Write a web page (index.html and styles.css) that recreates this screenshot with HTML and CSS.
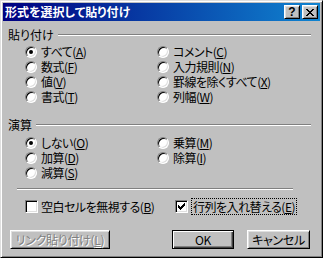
FILE: index.html
```html
<!DOCTYPE html>
<html lang="ja">
<head>
    <meta charset="UTF-8">
    <title>形式を選択して貼り付け</title>
    <link rel="stylesheet" href="styles.css">
</head>
<body>
    <div class="window">
        <div class="titlebar">
            <span class="title-text">形式を選択して貼り付け</span>
            <span class="tbtn help">?</span>
            <span class="tbtn close">
                <svg width="8" height="7" viewBox="0 0 8 7" shape-rendering="crispEdges"><path d="M0 0h2v1h-2z M6 0h2v1h-2z M1 1h2v1h-2z M5 1h2v1h-2z M2 2h4v1h-4z M3 3h2v1h-2z M2 4h4v1h-4z M1 5h2v1h-2z M5 5h2v1h-2z M0 6h2v1h-2z M6 6h2v1h-2z"/></svg>
            </span>
        </div>

        <div class="content">
            <div class="group-head"><span>貼り付け</span><div class="groove"></div></div>
            <div class="options">
                <label class="opt"><span class="radio on"></span>すべて(<u>A</u>)</label>
                <label class="opt"><span class="radio"></span>コメント(<u>C</u>)</label>
                <label class="opt"><span class="radio"></span>数式(<u>F</u>)</label>
                <label class="opt"><span class="radio"></span>入力規則(<u>N</u>)</label>
                <label class="opt"><span class="radio"></span>値(<u>V</u>)</label>
                <label class="opt"><span class="radio"></span>罫線を除くすべて(<u>X</u>)</label>
                <label class="opt"><span class="radio"></span>書式(<u>T</u>)</label>
                <label class="opt"><span class="radio"></span>列幅(<u>W</u>)</label>
            </div>

            <div class="group-head second"><span>演算</span><div class="groove"></div></div>
            <div class="options ops">
                <label class="opt"><span class="radio on"></span>しない(<u>O</u>)</label>
                <label class="opt"><span class="radio"></span>乗算(<u>M</u>)</label>
                <label class="opt"><span class="radio"></span>加算(<u>D</u>)</label>
                <label class="opt"><span class="radio"></span>除算(<u>I</u>)</label>
                <label class="opt"><span class="radio"></span>減算(<u>S</u>)</label>
            </div>

            <div class="separator"></div>

            <div class="checks">
                <label class="chk first"><span class="check"></span><span>空白セルを無視する(<u>B</u>)</span></label>
                <label class="chk"><span class="check">
                    <svg width="7" height="7" viewBox="0 0 7 7" shape-rendering="crispEdges"><path d="M6 0h1v3h-1z M5 1h1v3h-1z M4 2h1v3h-1z M3 3h1v3h-1z M2 4h1v3h-1z M1 3h1v3h-1z M0 2h1v3h-1z"/></svg>
                </span><span class="focus">行列を入れ替える(<u>E</u>)</span></label>
            </div>

            <div class="buttons">
                <button class="btn link" disabled>リンク貼り付け(<u>L</u>)</button>
                <button class="btn ok">OK</button>
                <button class="btn cancel">キャンセル</button>
            </div>
        </div>
    </div>
</body>
</html>
```

FILE: styles.css
```css
body {
    margin: 0;
    background: #c0c0c0;
    font-family: "Noto Sans CJK JP", "Noto Sans", sans-serif;
    font-size: 12px;
    line-height: 14px;
    font-feature-settings: "palt";
    color: #000;
}

.window {
    width: 323px;
    height: 258px;
    box-sizing: border-box;
    background: #c0c0c0;
    border: 1px solid;
    border-color: #dfdfdf #000 #000 #dfdfdf;
    box-shadow: inset 1px 1px #fff, inset -1px -1px #808080;
    padding: 2px;
}

.titlebar {
    height: 18px;
    display: flex;
    align-items: center;
    padding-left: 2px;
    background: linear-gradient(to right, #000080, #1084d0);
}
.title-text {
    flex: 1;
    color: #fff;
    font-weight: bold;
    line-height: 18px;
}
.tbtn {
    width: 16px;
    height: 14px;
    box-sizing: border-box;
    display: flex;
    align-items: center;
    justify-content: center;
    background: #c0c0c0;
    border: 1px solid;
    border-color: #fff #000 #000 #fff;
    box-shadow: inset 1px 1px #dfdfdf, inset -1px -1px #808080;
}
.help {
    font-family: "Liberation Sans", sans-serif;
    font-weight: bold;
    font-size: 12px;
    line-height: 12px;
    font-feature-settings: normal;
}
.close {
    margin-left: 2px;
    margin-right: 2px;
}

.content {
    padding: 7px 9px 0 5px;
}

.group-head {
    height: 14px;
    display: flex;
    align-items: center;
}
.group-head.second {
    margin-top: 14px;
}
.groove {
    flex: 1;
    margin-left: 4px;
    height: 0;
    border-top: 1px solid #808080;
    border-bottom: 1px solid #fff;
}

.options {
    margin-top: 2px;
    margin-left: 17px;
    display: grid;
    grid-template-columns: 132px 1fr;
    letter-spacing: -0.5px;
}
.options.ops {
    margin-top: 3px;
}
.opt {
    height: 15px;
    line-height: 15px;
    display: flex;
    align-items: center;
    white-space: nowrap;
}

.radio {
    width: 12px;
    height: 12px;
    box-sizing: border-box;
    border-radius: 50%;
    border: 1px solid;
    border-color: #808080 #fff #fff #808080;
    box-shadow: inset 1px 1px #000, inset -1px -1px #dfdfdf;
    background: #fff;
    display: flex;
    align-items: center;
    justify-content: center;
    margin-right: 4px;
    flex: none;
}
.radio.on::after {
    content: "";
    width: 4px;
    height: 4px;
    border-radius: 50%;
    background: #000;
}

.separator {
    margin: 8px 0 0 9px;
    width: 276px;
    border-top: 1px solid #808080;
    border-bottom: 1px solid #fff;
}

.checks {
    margin: 8px 0 0 17px;
    display: flex;
    height: 17px;
    letter-spacing: -0.5px;
}
.chk {
    display: flex;
    align-items: center;
    white-space: nowrap;
}
.chk.first {
    width: 150px;
}
.check {
    width: 13px;
    height: 13px;
    box-sizing: border-box;
    border: 1px solid;
    border-color: #808080 #fff #fff #808080;
    box-shadow: inset 1px 1px #000, inset -1px -1px #dfdfdf;
    background: #fff;
    display: flex;
    align-items: center;
    justify-content: center;
    margin-right: 3px;
    flex: none;
}
.focus {
    border: 1px dotted #000;
    padding: 0 1px;
    line-height: 15px;
}

.buttons {
    margin: 15px 0 0 2px;
    display: flex;
}
.btn {
    height: 19px;
    box-sizing: border-box;
    padding: 0;
    font: inherit;
    font-feature-settings: "palt";
    letter-spacing: -0.3px;
    color: #000;
    background: #c0c0c0;
    border: 1px solid;
    border-color: #fff #000 #000 #fff;
    box-shadow: inset 1px 1px #dfdfdf, inset -1px -1px #808080;
    line-height: 15px;
}
.btn.link {
    width: 100px;
    color: #808080;
    text-shadow: 1px 1px #fff;
}
.btn.ok {
    width: 62px;
    margin-left: 62px;
    border-color: #000;
    box-shadow: inset 1px 1px #fff, inset -1px -1px #404040, inset -2px -2px #808080;
}
.btn.cancel {
    width: 63px;
    margin-left: 13px;
}
```
